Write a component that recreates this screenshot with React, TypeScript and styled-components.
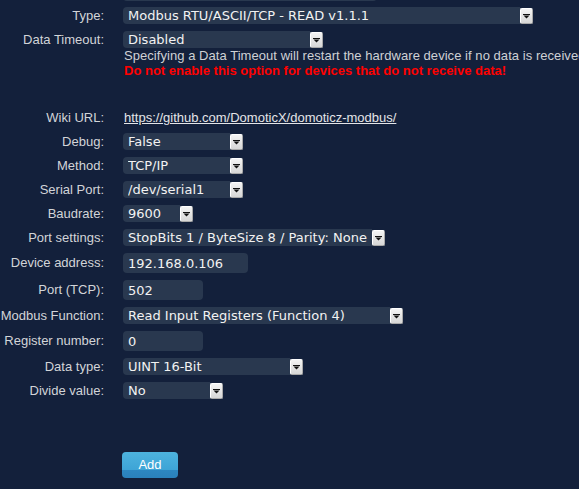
import React from "react";
import styled, { createGlobalStyle } from "styled-components";

const GlobalStyle = createGlobalStyle`
  html, body {
    margin: 0;
    padding: 0;
    background: #13203b;
    overflow: hidden;
  }
  body {
    font-family: "Liberation Sans", Arial, sans-serif;
    font-size: 13px;
  }
`;

const Page = styled.div`
  width: 579px;
  height: 489px;
  background: #13203b;
  overflow: hidden;
`;

const Form = styled.div`
  display: flex;
  flex-direction: column;
  gap: 7px;
`;

const Row = styled.div<{ $top?: number }>`
  display: flex;
  align-items: flex-start;
  margin-top: ${(p) => p.$top ?? 0}px;
`;

const Label = styled.div<{ $h?: number }>`
  flex: 0 0 104px;
  margin-right: 19px;
  text-align: right;
  white-space: nowrap;
  color: #d2d4d8;
  height: ${(p) => p.$h ?? 17}px;
  line-height: ${(p) => p.$h ?? 17}px;
`;

const Field = styled.div`
  display: flex;
  flex-direction: column;
  align-items: flex-start;
  white-space: nowrap;
`;

const SelectBox = styled.div<{ $w: number }>`
  display: flex;
  width: ${(p) => p.$w}px;
  height: 17px;
`;

const NativeSelect = styled.select`
  appearance: none;
  flex: 1;
  min-width: 0;
  height: 17px;
  margin: 0;
  padding: 0 0 0 5px;
  border: none;
  border-radius: 4px 0 0 4px;
  background: #29384f;
  color: #f2f2f2;
  font-family: "DejaVu Sans", sans-serif;
  font-size: 13px;
  line-height: 17px;
  outline: none;
`;

const ArrowButton = styled.span`
  flex: 0 0 13px;
  height: 16px;
  margin-top: 1px;
  box-sizing: border-box;
  display: flex;
  align-items: center;
  justify-content: center;
  background: linear-gradient(#f4f4f4, #d6d6d6);
  border: 1px solid #a9a9a9;
  border-top-color: #ffffff;
  border-left-color: #ffffff;
  border-radius: 2px;
`;

const TextInput = styled.input<{ $w: number; $h?: number }>`
  width: ${(p) => p.$w}px;
  height: ${(p) => p.$h ?? 20}px;
  box-sizing: border-box;
  margin: 0;
  padding: 0 5px;
  border: none;
  border-radius: 4px;
  background: #29384f;
  color: #f2f2f2;
  font-family: "DejaVu Sans", sans-serif;
  font-size: 13px;
  outline: none;
`;

/* previous field, scrolled mostly out of view */
const TopRow = styled.div`
  margin: -20px 0 -1px 123px;
  height: 21px;
`;

const Help = styled.div`
  color: #cfd1d5;
  line-height: 15px;
  padding-left: 1px;
  letter-spacing: 0.05px;
`;

const Warning = styled.div`
  color: #ff0000;
  font-weight: bold;
  line-height: 15px;
  padding-left: 1px;
`;

const Link = styled.a`
  color: #e4e5e8;
  text-decoration: underline;
  line-height: 16px;
  padding-left: 1px;
`;

const AddButton = styled.button`
  width: 56px;
  height: 26px;
  margin-left: -1px;
  padding: 0;
  border: none;
  border-radius: 4px;
  background: linear-gradient(#4db3de 0%, #3ea4d6 68%, #2d87c1 69%, #2a81bb 100%);
  color: #ffffff;
  font-family: "Liberation Sans", Arial, sans-serif;
  font-size: 13px;
  line-height: 26px;
  cursor: pointer;
`;

const Arrow = () => (
  <svg width="7" height="5" viewBox="0 0 7 5">
    <rect x="0" y="0" width="7" height="1" fill="#111" />
    <polygon points="0.5,1.5 6.5,1.5 3.5,4.5" fill="#111" />
  </svg>
);

const Select: React.FC<{ width: number; value: string }> = ({ width, value }) => (
  <SelectBox $w={width}>
    <NativeSelect defaultValue={value}>
      <option>{value}</option>
    </NativeSelect>
    <ArrowButton>
      <Arrow />
    </ArrowButton>
  </SelectBox>
);

const selects: [string, number, string][] = [
  ["Debug:", 120, "False"],
  ["Method:", 120, "TCP/IP"],
  ["Serial Port:", 120, "/dev/serial1"],
  ["Baudrate:", 70, "9600"],
  ["Port settings:", 262, "StopBits 1 / ByteSize 8 / Parity: None"],
];

const App: React.FC = () => (
  <Page>
    <GlobalStyle />
    <Form>
      <TopRow>
        <TextInput $w={254} $h={21} readOnly />
      </TopRow>
      <Row>
        <Label>Type:</Label>
        <Field>
          <Select width={410} value="Modbus RTU/ASCII/TCP - READ v1.1.1" />
        </Field>
      </Row>
      <Row>
        <Label>Data Timeout:</Label>
        <Field>
          <Select width={200} value="Disabled" />
          <Help>Specifying a Data Timeout will restart the hardware device if no data is received</Help>
          <Warning>Do not enable this option for devices that do not receive data!</Warning>
        </Field>
      </Row>
      <Row $top={25}>
        <Label $h={16}>Wiki URL:</Label>
        <Field>
          <Link href="#">https://github.com/DomoticX/domoticz-modbus/</Link>
        </Field>
      </Row>
      {selects.map(([label, w, v]) => (
        <Row key={label}>
          <Label>{label}</Label>
          <Field>
            <Select width={w} value={v} />
          </Field>
        </Row>
      ))}
      <Row>
        <Label $h={20}>Device address:</Label>
        <Field>
          <TextInput $w={125} defaultValue="192.168.0.106" />
        </Field>
      </Row>
      <Row>
        <Label $h={20}>Port (TCP):</Label>
        <Field>
          <TextInput $w={80} defaultValue="502" />
        </Field>
      </Row>
      <Row>
        <Label>Modbus Function:</Label>
        <Field>
          <Select width={280} value="Read Input Registers (Function 4)" />
        </Field>
      </Row>
      <Row>
        <Label $h={20}>Register number:</Label>
        <Field>
          <TextInput $w={80} defaultValue="0" />
        </Field>
      </Row>
      <Row>
        <Label>Data type:</Label>
        <Field>
          <Select width={180} value="UINT 16-Bit" />
        </Field>
      </Row>
      <Row>
        <Label>Divide value:</Label>
        <Field>
          <Select width={100} value="No" />
        </Field>
      </Row>
      <Row $top={46}>
        <Label />
        <Field>
          <AddButton>Add</AddButton>
        </Field>
      </Row>
    </Form>
  </Page>
);

export default App;
